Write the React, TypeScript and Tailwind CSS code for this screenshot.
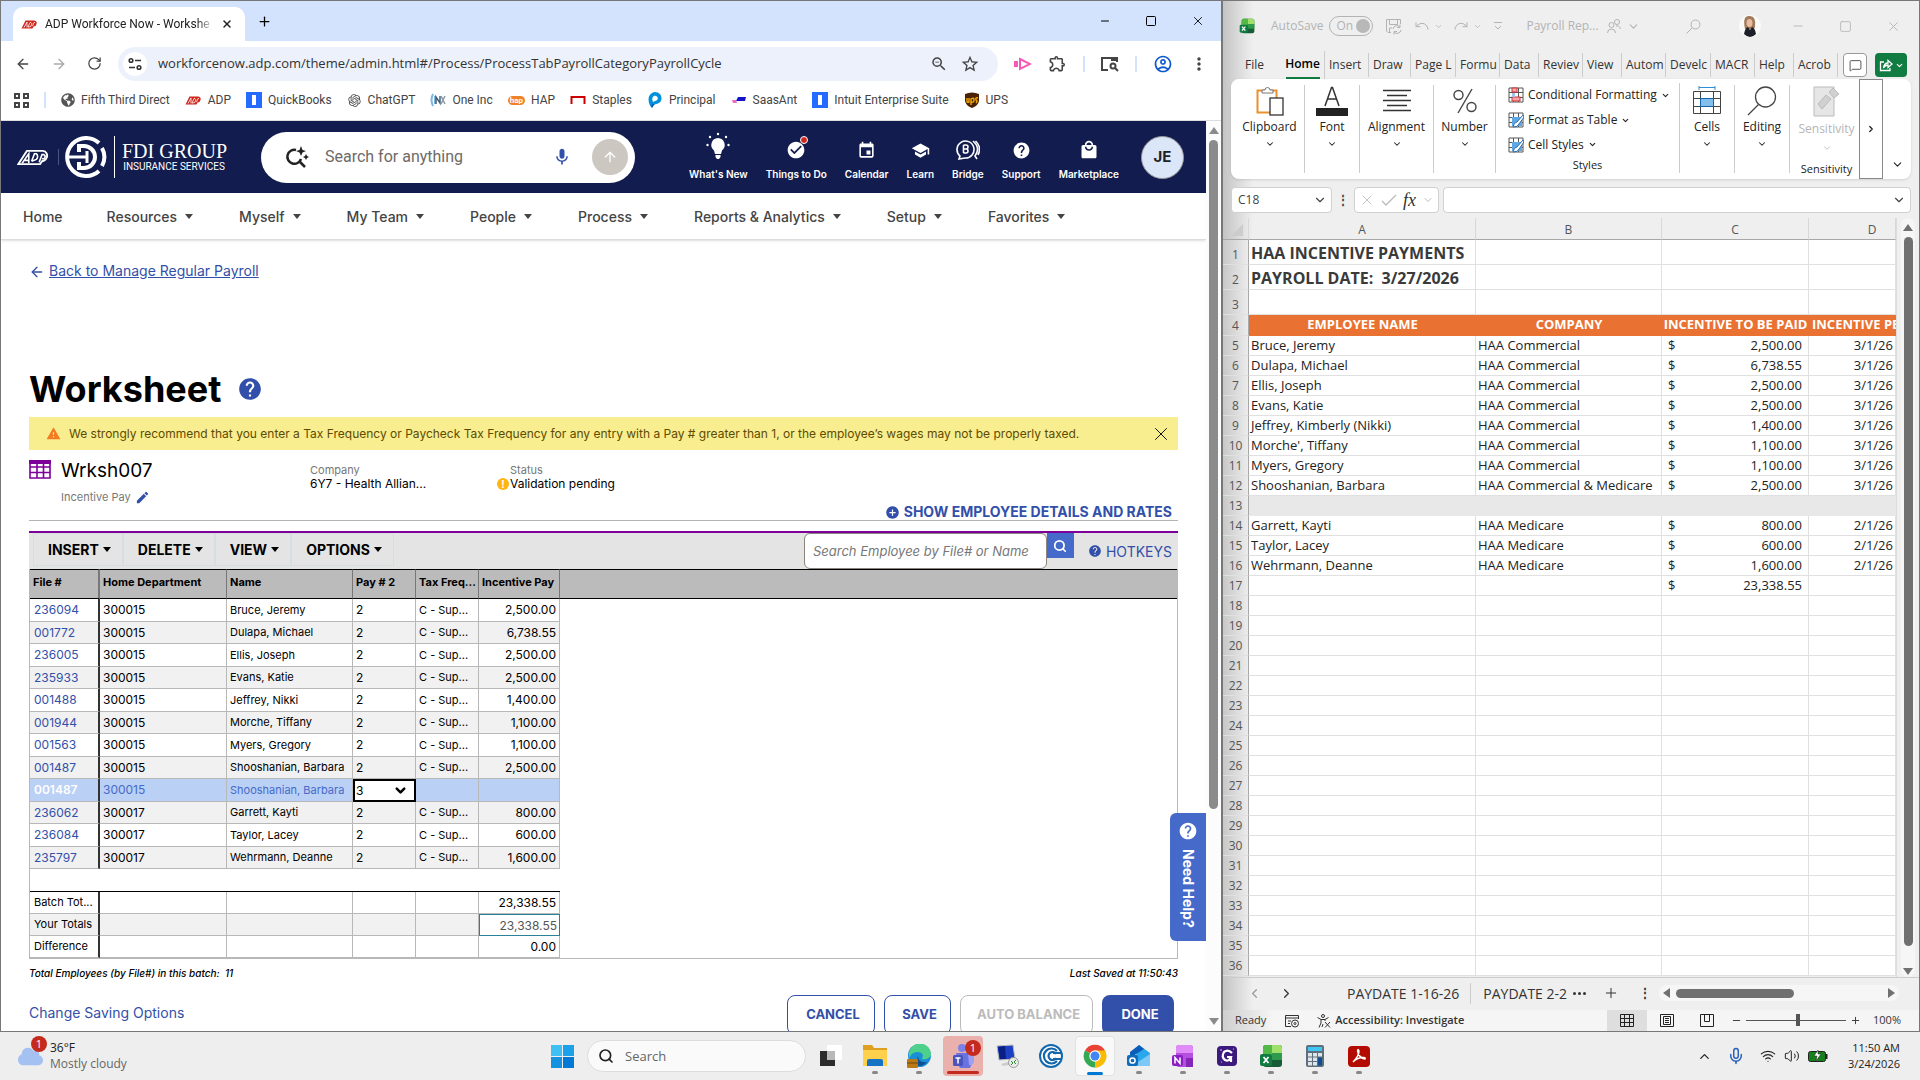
import type { ReactNode } from "react";
import {
    ArrowLeft, ArrowRight, ArrowUp, ChevronDown, ChevronLeft, ChevronRight, ChevronUp, MessageSquare,
    Minus, Plus, RotateCw, Search, Share, Square, X, Wifi, Volume2, Undo, Redo, Mic
} from "lucide-react";
import {
    MdCheckCircle, MdEdit, MdEvent, MdHelp, MdLocalMall, MdMic, MdMoreVert, MdOutlineAccountCircle,
    MdOutlineExtension, MdSchool, MdStarOutline, MdWarning, MdZoomOut, MdAddCircle
} from "react-icons/md";
import { RiOpenaiFill } from "react-icons/ri";
import { FaGlobeAmericas, FaCloud } from "react-icons/fa";

const worksheetRows = [
    ["236094", "300015", "Bruce, Jeremy", "2", "C - Sup...", "2,500.00"],
    ["001772", "300015", "Dulapa, Michael", "2", "C - Sup...", "6,738.55"],
    ["236005", "300015", "Ellis, Joseph", "2", "C - Sup...", "2,500.00"],
    ["235933", "300015", "Evans, Katie", "2", "C - Sup...", "2,500.00"],
    ["001488", "300015", "Jeffrey, Nikki", "2", "C - Sup...", "1,400.00"],
    ["001944", "300015", "Morche, Tiffany", "2", "C - Sup...", "1,100.00"],
    ["001563", "300015", "Myers, Gregory", "2", "C - Sup...", "1,100.00"],
    ["001487", "300015", "Shooshanian, Barbara", "2", "C - Sup...", "2,500.00"],
    ["001487", "300015", "Shooshanian, Barbara", "3", "", ""],
    ["236062", "300017", "Garrett, Kayti", "2", "C - Sup...", "800.00"],
    ["236084", "300017", "Taylor, Lacey", "2", "C - Sup...", "600.00"],
    ["235797", "300017", "Wehrmann, Deanne", "2", "C - Sup...", "1,600.00"],
];
const selectedRow = 8;

const sheetRows: Record<number, string[]> = {
    5: ["Bruce, Jeremy", "HAA Commercial", "2,500.00", "3/1/26"],
    6: ["Dulapa, Michael", "HAA Commercial", "6,738.55", "3/1/26"],
    7: ["Ellis, Joseph", "HAA Commercial", "2,500.00", "3/1/26"],
    8: ["Evans, Katie", "HAA Commercial", "2,500.00", "3/1/26"],
    9: ["Jeffrey, Kimberly (Nikki)", "HAA Commercial", "1,400.00", "3/1/26"],
    10: ["Morche', Tiffany", "HAA Commercial", "1,100.00", "3/1/26"],
    11: ["Myers, Gregory", "HAA Commercial", "1,100.00", "3/1/26"],
    12: ["Shooshanian, Barbara", "HAA Commercial & Medicare", "2,500.00", "3/1/26"],
    14: ["Garrett, Kayti", "HAA Medicare", "800.00", "2/1/26"],
    15: ["Taylor, Lacey", "HAA Medicare", "600.00", "2/1/26"],
    16: ["Wehrmann, Deanne", "HAA Medicare", "1,600.00", "2/1/26"],
    17: ["", "", "23,338.55", ""],
};

/* ---------- small drawings ---------- */

function AdpMark()
{
    return (
        <svg viewBox="0 0 34 20" className="h-[11px] w-[17px]">
            <path d="M1 18 L9 2 H27 a5 5 0 0 1 4 7 a6 6 0 0 1 -6 5 L23 18 Z" fill="#d0271d"/>
            <path d="M6 16 L12 5 V16 M14 15 L18 6 H20 a3 3 0 0 1 1 4 a5 5 0 0 1 -5 5 Z M23 13 L26 6 H28" fill="none" stroke="#fff" strokeWidth="1.6"/>
        </svg>
    );
}

function IntuitMark()
{
    return <span className="flex h-4 w-4 items-center justify-center bg-[#236cff]"><span className="h-2.5 w-1 bg-white"></span></span>;
}

function OneIncMark()
{
    return (
        <svg viewBox="0 0 16 16" className="h-4 w-4" fill="none">
            <path d="M3 2 Q0 8 3 14 M5 4 V12" stroke="#7fb6dd" strokeWidth="2"/>
            <path d="M6 12 V5 L10 11 V4" stroke="#45617a" strokeWidth="1.5"/>
            <path d="M11 4 L15 12 M15 4 L11 12" stroke="#8a97a8" strokeWidth="1.5"/>
        </svg>
    );
}

function StaplesMark()
{
    return <svg viewBox="0 0 16 16" className="h-4 w-4"><path d="M1.500 12 V5 H14.500 V12" fill="none" stroke="#cc0000" strokeWidth="2"/></svg>;
}

function PrincipalMark()
{
    return (
        <svg viewBox="0 0 16 16" className="h-4 w-4">
            <path d="M5 16 C0 11 0 1 8 0 C16 0 17 11 9 12 C7 12 6 14 5 16Z" fill="#0091da"/>
            <path d="M6 10 C4 5 7 3 9 4 C12 5 11 9 8 9Z" fill="#fff"/>
            <path d="M5 16 C4 13 5 12 9 12 C7 12 6 14 5 16Z" fill="#003da5"/>
        </svg>
    );
}

function SaasAntMark()
{
    return <svg viewBox="0 0 16 16" className="h-4 w-4"><path d="M7 5 H15 L14 9 H5Z" fill="#1512c9"/><path d="M1 8 H5 L6 11 H2Z" fill="#f06bc0"/></svg>;
}

function UpsMark()
{
    return (
        <svg viewBox="0 0 16 16" className="h-4 w-4">
            <path d="M1 2 Q8 -1 15 2 V9 Q14 14 8 16 Q2 14 1 9Z" fill="#4a2207"/>
            <path d="M3 6 V9 Q3 11 5 10 V6 M7 13 V7 Q10 5 10 8 Q10 11 7 10 M14 6 Q11 5 12 8 Q14 9 12 11" fill="none" stroke="#f5a800" strokeWidth="1.400"/>
        </svg>
    );
}

function FdiMark()
{
    return (
        <svg viewBox="0 0 42 42" className="h-[42px] w-[42px]" fill="none" stroke="#fff" strokeWidth="4">
            <path d="M34 7 A19 19 0 1 0 34 35"/>
            <path d="M37 12 A19 19 0 0 1 37 30"/>
            <path d="M1 21 H22" strokeWidth="3"/>
            <path d="M14 16 V10 H19 A11 11 0 0 1 19 32 H14 V26"/>
            <path d="M22 15 V27" strokeWidth="3"/>
        </svg>
    );
}

function SparkSearch()
{
    return (
        <svg viewBox="0 0 24 24" className="h-6 w-6" fill="none" stroke="#222" strokeWidth="2.500">
            <path d="M11 5 A7 7 0 1 0 16 14"/>
            <path d="M15 17 L20 22"/>
            <path d="M16 1 L17.500 5 L21 6 L17.500 7.500 L16 11 L14.500 7.500 L11 6 L14.500 5Z" fill="#222" stroke="none"/>
            <path d="M21 9 L22 11 L24 12 L22 13 L21 15 L20 13 L18 12 L20 11Z" fill="#222" stroke="none"/>
        </svg>
    );
}

function BulbIcon()
{
    return (
        <svg viewBox="0 0 24 28" className="mb-2 h-7 w-6" fill="#fff">
            <path d="M12 6 A7 7 0 0 0 8 18.500 L9 22 H15 L16 18.500 A7 7 0 0 0 12 6Z M9.500 23 H14.500 V25 L13 27 H11 L9.500 25Z"/>
            <circle cx="12" cy="2" r="1.200"/><circle cx="4" cy="5" r="1.200"/><circle cx="20" cy="5" r="1.200"/>
            <circle cx="1.500" cy="13" r="1.200"/><circle cx="22.500" cy="13" r="1.200"/>
        </svg>
    );
}

function BridgeIcon()
{
    return (
        <svg viewBox="0 0 24 22" className="h-[22px] w-6" fill="none" stroke="#fff" strokeWidth="1.600">
            <path d="M3 20 L4 17 A8.500 8.500 0 1 1 9 19 Z"/>
            <path d="M7.500 6 V14 M7.500 6 H10 A2 2 0 0 1 10 10 H7.500 M10 10 A2 2 0 0 1 10 14 H7.500"/>
            <path d="M17 2 Q25 9 19 17 L21 20 M19.500 2 Q26 8 22 16"/>
        </svg>
    );
}

function ExcelMark(props: { className: string })
{
    return (
        <svg viewBox="0 0 24 24" className={props.className}>
            <rect x="4" y="1" width="19" height="22" rx="3" fill="#185c37"/>
            <path d="M4 4 a3 3 0 0 1 3 -3 H13 V12 H4Z" fill="#52b846"/>
            <path d="M13 1 H20 a3 3 0 0 1 3 3 V9 H13Z" fill="#9fe06a"/>
            <rect x="13" y="9" width="10" height="7" fill="#2e9a4c"/>
            <rect x="1" y="10" width="12" height="12" rx="2" fill="#107c41"/>
            <path d="M4.500 13 L9.500 19 M9.500 13 L4.500 19" stroke="#fff" strokeWidth="1.800"/>
        </svg>
    );
}

function ClipboardIcon()
{
    return (
        <svg viewBox="0 0 28 30" className="h-[30px] w-7">
            <rect x="1.500" y="4.500" width="19" height="22" fill="#fff" stroke="#e8912d" strokeWidth="2"/>
            <path d="M6 7 V4 H9 A2.500 2.500 0 0 1 14 4 H17 V7Z" fill="#fff" stroke="#777"/>
            <rect x="14" y="12" width="13" height="17" fill="#fff" stroke="#333" strokeWidth="1.300"/>
        </svg>
    );
}

function GridIcon(props: { kind: string })
{
    return (
        <svg viewBox="0 0 16 16" className="h-4 w-4">
            <path d="M1 1 H15 V15 H1Z M1 5.500 H15 M1 10.500 H15 M5.500 1 V15 M10.500 1 V15" fill="#fff" stroke="#555"/>
            {props.kind == "conditional" ?
                <><rect x="4" y="1" width="5" height="4" fill="#f7a5a5" stroke="#d13438"/><rect x="4" y="10" width="8" height="4" fill="#f7a5a5" stroke="#d13438"/><rect x="4" y="6" width="3" height="4" fill="#9dc8ee"/></>
                : <><rect x="4" y="5" width="10" height="9" fill="#5ea8e5"/><path d="M15 3 L9 10 Q6 10 5 15 Q10 15 11 12 L16 5Z" fill="#fff" stroke="#2b6cb0"/></>}
        </svg>
    );
}

function CellsIcon()
{
    return (
        <svg viewBox="0 0 28 30" className="h-[30px] w-7" fill="none">
            <path d="M6 1.500 H22 M6 0 V4 M22 0 V4" stroke="#2f8fd8"/>
            <path d="M0.500 5.500 H27.500 V27.500 H0.500Z M0.500 12.500 H27.500 M0.500 20.500 H27.500 M7.500 5.500 V27.500 M20.500 5.500 V27.500" stroke="#444"/>
            <rect x="7.500" y="12.500" width="13" height="8" fill="#83beec" stroke="#1664a8"/>
        </svg>
    );
}

/* ---------- browser window ---------- */

function Caret()
{
    return <span className="inline-block border-x-4 border-t-[5px] border-x-transparent border-t-current"></span>;
}

function Bookmark(props: { label: string, children: ReactNode })
{
    return (
        <a href="#" className="flex shrink-0 items-center gap-1.5 text-[#444]">
            {props.children}
            <span>{props.label}</span>
        </a>
    );
}

function BrowserChrome()
{
    return (
        <header className="font-['Open_Sans',sans-serif]">
            <div className="flex h-10 items-end bg-[#d3e2fd] pl-3">
                <div className="flex h-[34px] w-[232px] items-center gap-[7px] rounded-t-[10px] bg-white px-2 font-['Roboto',sans-serif] text-[12px] text-[#222]">
                    <AdpMark/>
                    <span className="flex-1 overflow-hidden whitespace-nowrap mask-r-from-90%">ADP Workforce Now - Workshe</span>
                    <button aria-label="Close tab" className="py-1 pr-1"><X size={12} strokeWidth={3}/></button>
                </div>
                <button aria-label="New tab" className="mb-3 ml-3"><Plus size={15}/></button>
                <div className="ml-auto flex h-full items-center gap-[34px] pr-4">
                    <button aria-label="Minimize"><Minus size={12} strokeWidth={2}/></button>
                    <button aria-label="Maximize"><Square size={12} strokeWidth={2}/></button>
                    <button aria-label="Close"><X size={14} strokeWidth={1.5}/></button>
                </div>
            </div>
            <div className="flex h-[45px] items-center gap-5 bg-white pr-3 pl-[14px] text-[#444]">
                <button aria-label="Back"><ArrowLeft size={16}/></button>
                <button aria-label="Forward" className="text-[#aaa]"><ArrowRight size={16}/></button>
                <button aria-label="Reload"><RotateCw size={15}/></button>
                <div className="-ml-1 flex h-[34px] flex-1 items-center gap-2 rounded-full bg-[#ecf1fb] pr-[14px] pl-[5px]">
                    <button aria-label="Site information" className="flex h-6 w-6 items-center justify-center rounded-full bg-white">
                        <svg viewBox="0 0 14 14" className="h-[14px] w-[14px]" fill="none" stroke="#333" strokeWidth="1.600">
                            <circle cx="3" cy="3.500" r="1.800"/><path d="M7 3.500 H13 M1 10.500 H7"/><circle cx="11" cy="10.500" r="1.800"/>
                        </svg>
                    </button>
                    <input aria-label="Address" className="min-w-0 flex-1 bg-transparent pl-[3px] text-[13px] text-[#333] outline-none" defaultValue="workforcenow.adp.com/theme/admin.html#/Process/ProcessTabPayrollCategoryPayrollCycle"/>
                    <button aria-label="Zoom"><MdZoomOut size={18}/></button>
                    <button aria-label="Bookmark" className="mr-1 ml-1"><MdStarOutline size={20}/></button>
                </div>
                <div className="-ml-1 flex items-center gap-4">
                    <button aria-label="Recorder">
                        <svg viewBox="0 0 18 14" className="h-[14px] w-[18px]" fill="none" stroke="#f759b8" strokeWidth="2"><path d="M6 2 L16 7 L6 12Z"/><path d="M0 4 H4 V10 H0Z" fill="#f759b8" stroke="none"/></svg>
                    </button>
                    <button aria-label="Extensions"><MdOutlineExtension size={19}/></button>
                    <span className="h-4 w-0.5 bg-[#d3e2fd]"></span>
                    <button aria-label="Search tabs">
                        <svg viewBox="0 0 18 16" className="h-4 w-[18px]" fill="none" stroke="#444" strokeWidth="2"><path d="M7 14 H1 V2 H16 V6"/><path d="M10 3.500 H17" strokeWidth="3"/><circle cx="12" cy="10" r="2.500"/><path d="M14 12 L17 15"/></svg>
                    </button>
                    <span className="h-4 w-0.5 bg-[#d3e2fd]"></span>
                    <button aria-label="Profile" className="text-[#0b57d0]"><MdOutlineAccountCircle size={20}/></button>
                    <button aria-label="Menu"><MdMoreVert size={20}/></button>
                </div>
            </div>
            <nav className="flex h-[35px] items-center gap-[15px] overflow-hidden border-b border-[#ddd] bg-white pb-1.5 pl-[13px] font-['Roboto',sans-serif] text-[12px] text-[#444]">
                <button aria-label="Apps" className="grid grid-cols-2 gap-[3px]">
                    <span className="h-1.5 w-1.5 border-2"></span><span className="h-1.5 w-1.5 border-2"></span>
                    <span className="h-1.5 w-1.5 border-2"></span><span className="h-1.5 w-1.5 border-2"></span>
                </button>
                <span className="h-4 w-0.5 bg-[#d3e2fd]"></span>
                <Bookmark label="Fifth Third Direct"><FaGlobeAmericas size={14} color="#555"/></Bookmark>
                <Bookmark label="ADP"><AdpMark/></Bookmark>
                <Bookmark label="QuickBooks"><IntuitMark/></Bookmark>
                <Bookmark label="ChatGPT"><RiOpenaiFill size={15}/></Bookmark>
                <Bookmark label="One Inc"><OneIncMark/></Bookmark>
                <Bookmark label="HAP"><span className="rounded-full bg-[#f08228] px-0.5 text-[8px] leading-[9px] font-bold text-white">hap</span></Bookmark>
                <Bookmark label="Staples"><StaplesMark/></Bookmark>
                <Bookmark label="Principal"><PrincipalMark/></Bookmark>
                <Bookmark label="SaasAnt"><SaasAntMark/></Bookmark>
                <Bookmark label="Intuit Enterprise Suite"><IntuitMark/></Bookmark>
                <Bookmark label="UPS"><UpsMark/></Bookmark>
            </nav>
        </header>
    );
}

function HeaderLink(props: { label: string, children: ReactNode })
{
    return (
        <a href="#" className="flex flex-col items-center text-[10px] leading-4 font-semibold whitespace-nowrap text-white">
            <span className="relative mt-1 flex h-7 items-center">{props.children}</span>
            <span className="mt-0.5">{props.label}</span>
        </a>
    );
}

function AppHeader()
{
    return (
        <div className="flex h-[72px] items-center bg-[#121c4e] pr-[22px] pl-4 text-white">
            <svg viewBox="0 0 34 18" className="h-[17px] w-[33px]" fill="none" stroke="#fff">
                <path d="M1 16 L10 2 H27 a5 5 0 0 1 4 7 a6 6 0 0 1 -5 4 L24 16 Z" strokeWidth="2"/>
                <path d="M5 15 L12 5 V15 M8 12 H12 M15 13 L18 5 H20 a4 4 0 0 1 0 6 L15 13 M23 14 L26 6 H28 a2 2 0 0 1 -2 4" strokeWidth="1.700"/>
            </svg>
            <span className="mr-1.5 ml-2 h-4 w-px bg-[#4b5480]"></span>
            <FdiMark/>
            <span className="mx-[7px] h-[42px] w-px bg-white"></span>
            <div className="w-[104px] text-center whitespace-nowrap">
                <p className="font-['Liberation_Serif',serif] text-[20px] leading-5">FDI GROUP</p>
                <p className="font-['Roboto',sans-serif] text-[10px] leading-3">INSURANCE SERVICES</p>
            </div>
            <div className="ml-[35px] flex h-[51px] w-[374px] items-center rounded-full bg-white pr-[7px] pl-6">
                <SparkSearch/>
                <input aria-label="Search for anything" placeholder="Search for anything" className="ml-4 min-w-0 flex-1 font-['Roboto',sans-serif] text-[16px] text-[#666] outline-none placeholder:text-[#6e6a66]"/>
                <button aria-label="Voice search" className="mr-5 text-[#324fa9]"><MdMic size={20}/></button>
                <button aria-label="Submit search" className="flex h-9 w-9 items-center justify-center rounded-full bg-[#ccc7c1] text-white"><ArrowUp size={16}/></button>
            </div>
            <div className="ml-auto flex items-center gap-[18px]">
                <HeaderLink label="What's New"><BulbIcon/></HeaderLink>
                <HeaderLink label="Things to Do">
                    <MdCheckCircle size={20}/>
                    <span className="absolute top-0 -right-0.5 h-2 w-2 rounded-full border border-white bg-[#d0271d]"></span>
                </HeaderLink>
                <HeaderLink label="Calendar"><MdEvent size={19}/></HeaderLink>
                <HeaderLink label="Learn"><MdSchool size={19}/></HeaderLink>
                <HeaderLink label="Bridge"><BridgeIcon/></HeaderLink>
                <HeaderLink label="Support"><MdHelp size={19}/></HeaderLink>
                <HeaderLink label="Marketplace"><MdLocalMall size={20}/></HeaderLink>
                <button className="ml-1 h-[43px] w-[43px] rounded-full border border-[#999] bg-[#dbe6f9] text-[15px] font-bold text-[#222]">JE</button>
            </div>
        </div>
    );
}

function MainNav()
{
    const items = ["Resources", "Myself", "My Team", "People", "Process", "Reports & Analytics", "Setup", "Favorites"];
    return (
        <nav className="flex h-[47px] items-center gap-[46px] border-b border-[#ddd] pl-[22px] text-[14px] font-medium whitespace-nowrap text-[#444] shadow-sm">
            <a href="#" className="-mr-0.5">Home</a>
            {items.map((it) => <button key={it} className="flex items-center gap-2">{it}<Caret/></button>)}
        </nav>
    );
}

function WorksheetInfo()
{
    return (
        <div className="relative h-[71px] border-b border-[#b4b4b4] pt-[9px]">
            <div className="flex">
                <div className="flex w-[281px] gap-[10px]">
                    <svg viewBox="0 0 22 19" className="mt-px h-[19px] w-[22px]" fill="none" stroke="#7d009b" strokeWidth="2">
                        <path d="M1 1 H21 V18 H1Z M1 7 H21 M1 12.500 H21 M8 3 V18 M14.500 3 V18" strokeWidth="1.600"/><path d="M0 2 H22" strokeWidth="4"/>
                    </svg>
                    <div>
                        <h2 className="text-[19px] leading-6">Wrksh007</h2>
                        <p className="mt-1.5 flex items-center gap-1 text-[11px] leading-4 text-[#777]">Incentive Pay
                            <button aria-label="Edit" className="text-[#324fa9]"><MdEdit size={15}/></button>
                        </p>
                    </div>
                </div>
                <div className="mt-1 w-[187px] text-[12px] leading-[14px]">
                    <p className="text-[11px] text-[#777]">Company</p>
                    <p>6Y7 - Health Allian...</p>
                </div>
                <div className="mt-1 text-[12px] leading-[14px]">
                    <p className="pl-[13px] text-[11px] text-[#777]">Status</p>
                    <p className="flex items-center gap-px"><span className="flex h-3 w-3 items-center justify-center rounded-full bg-[#ffb612] text-[10px] font-bold text-white">!</span>Validation pending</p>
                </div>
            </div>
            <button className="absolute right-1.5 bottom-0 flex items-center gap-1 text-[14px] leading-4 font-bold text-[#324fa9]">
                <MdAddCircle size={15}/>SHOW EMPLOYEE DETAILS AND RATES
            </button>
        </div>
    );
}

function WorksheetToolbar()
{
    return (
        <div className="mt-2.5 flex h-[38px] border-t-2 border-[#7d009b] bg-[#e4e4e4] pl-1">
            {["INSERT", "DELETE", "VIEW", "OPTIONS"].map((it) => (
                <button key={it} className="mb-[3px] flex items-center gap-1 border border-[#d5dfe2] pr-[11px] pl-3.5 text-[14px] font-bold">{it}<Caret/></button>
            ))}
            <div className="ml-auto flex items-start">
                <input aria-label="Search employee" placeholder="Search Employee by File# or Name" className="h-9 w-[243px] rounded-md border border-[#8c857b] bg-white px-2 text-[13px] italic placeholder:text-[#777]"/>
                <button aria-label="Search" className="flex h-[25px] w-[27px] items-center justify-center bg-[#466ac9] text-white"><Search size={14} strokeWidth={3}/></button>
                <a href="#" className="mr-1.5 ml-[14px] flex h-9 items-center gap-1 text-[14px] text-[#324fa9]"><MdHelp size={14}/>HOTKEYS</a>
            </div>
        </div>
    );
}

function WorksheetTable()
{
    const line = "border-r border-b border-[#b8b8b8] px-[3px] whitespace-nowrap";
    const firstCell = "border-b border-b-[#b8b8b8] border-r-2 border-r-[#333] px-1 whitespace-nowrap";
    const head = "h-[30px] border-y border-y-black border-r border-r-[#777] px-[3px] pb-1 text-left text-[11px] font-bold whitespace-nowrap";
    return (
        <div className="border-r border-b border-l border-[#b8b8b8] text-[12px]">
            <table className="w-full table-fixed border-separate border-spacing-0">
                <colgroup>
                    <col className="w-[70px]"/><col className="w-[127px]"/><col className="w-[126px]"/><col className="w-[63px]"/>
                    <col className="w-[63px]"/><col className="w-[81px]"/><col/>
                </colgroup>
                <thead>
                    <tr className="bg-[#bbb]">
                        <th className={head + " border-r-2 border-r-[#333]"}>File #</th>
                        <th className={head}>Home Department</th>
                        <th className={head}>Name</th>
                        <th className={head}>Pay # 2</th>
                        <th className={head}>Tax Freq...</th>
                        <th className={head}>Incentive Pay</th>
                        <th className="border-y border-black"></th>
                    </tr>
                </thead>
                <tbody>
                    {worksheetRows.map((row, index) => {
                        const isSelected = index == selectedRow;
                        let color = index % 2 == 0 ? "bg-white h-[23px]" : "bg-[#f1f1f1] h-[22px]";
                        if(isSelected) color = "bg-[#bbd0f5] text-[#466ac9] h-[23px]";
                        return (
                            <tr key={index}>
                                <td className={firstCell + " " + color}>
                                    <a href="#" className={isSelected ? "font-semibold text-white" : "text-[#324fa9]"}>{row[0]}</a>
                                </td>
                                <td className={line + " " + color}>{row[1]}</td>
                                <td className={line + " text-[11px] " + color}>{row[2]}</td>
                                {isSelected ?
                                    <td className={color}>
                                        <div className="relative">
                                            <select aria-label="Pay number" className="block h-[23px] w-full appearance-none border-2 border-black bg-white px-px text-black" defaultValue="3">
                                                <option>1</option><option>2</option><option>3</option>
                                            </select>
                                            <ChevronDown size={15} strokeWidth={4} className="pointer-events-none absolute top-1 right-2 text-black"/>
                                        </div>
                                    </td>
                                    : <td className={line + " " + color}>{row[3]}</td>}
                                <td className={line + " text-[11px] " + color}>{row[4]}</td>
                                <td className={line + " text-right " + color}>{row[5]}</td>
                                <td></td>
                            </tr>
                        );
                    })}
                    <tr><td colSpan={6} className="h-[23px] border-b border-black"></td><td></td></tr>
                    {[["Batch Tot...", "23,338.55"], ["Your Totals", "23,338.55"], ["Difference", "0.00"]].map((row, index) => {
                        const color = index == 1 ? "bg-[#f1f1f1] h-[22px]" : "bg-white h-[22px]";
                        return (
                            <tr key={row[0]}>
                                <td className={firstCell + " text-[11px] " + color}>{row[0]}</td>
                                <td className={line + " " + color}></td>
                                <td className={line + " " + color}></td>
                                <td className={line + " " + color}></td>
                                <td className={line + " " + color}></td>
                                {index == 1 ?
                                    <td className="h-[22px]"><input aria-label="Your totals" className="block h-[22px] w-full border border-[#2b8298] px-0.5 text-right text-[#555]" defaultValue={row[1]}/></td>
                                    : <td className={line + " text-right " + color}>{row[1]}</td>}
                                <td></td>
                            </tr>
                        );
                    })}
                </tbody>
            </table>
        </div>
    );
}

function WorksheetPage()
{
    const outline = "h-10 rounded-lg border border-[#324fa9] pl-1 text-[13px] font-bold text-[#324fa9]";
    return (
        <main className="px-7">
            <a href="#" className="mt-[21px] flex items-center gap-1 text-[14px] leading-5 text-[#324fa9]">
                <ArrowLeft size={16} className="mt-0.5"/><span className="underline">Back to Manage Regular Payroll</span>
            </a>
            <div className="mt-[85px] flex h-[46px] items-center gap-4">
                <h1 className="text-[36px] font-bold">Worksheet</h1>
                <button aria-label="Help" className="text-[#324fa9]"><MdHelp size={26}/></button>
            </div>
            <div className="mt-[5px] flex h-[33px] items-center bg-[#f8ee8f] pr-1.5 pl-[17px] text-[12px] text-[#5f4b00]">
                <MdWarning size={15} className="mr-2 text-[#f47b20]"/>
                <p className="flex-1 whitespace-nowrap">We strongly recommend that you enter a Tax Frequency or Paycheck Tax Frequency for any entry with a Pay # greater than 1, or the employee’s wages may not be properly taxed.</p>
                <button aria-label="Dismiss" className="text-black"><X size={22} strokeWidth={1}/></button>
            </div>
            <WorksheetInfo/>
            <WorksheetToolbar/>
            <WorksheetTable/>
            <div className="mt-1.5 flex justify-between text-[10px] leading-4 font-medium italic">
                <p className="whitespace-pre">Total Employees (by File#) in this batch:  11</p>
                <p>Last Saved at 11:50:43</p>
            </div>
            <div className="mt-3.5 flex items-start gap-[9px] pr-1">
                <a href="#" className="mt-2 mr-auto text-[14px] leading-5 text-[#324fa9]">Change Saving Options</a>
                <button className={outline + " w-[88px]"}>CANCEL</button>
                <button className={outline + " w-[67px]"}>SAVE</button>
                <button disabled className="h-10 w-[133px] rounded-lg border border-[#bbb] pl-1 text-[13px] font-bold text-[#bbb]">AUTO BALANCE</button>
                <button className="h-10 w-[72px] rounded-lg bg-[#324fa9] pl-1 text-[13px] font-bold text-white">DONE</button>
            </div>
        </main>
    );
}

function BrowserWindow()
{
    return (
        <section className="flex min-w-0 flex-col overflow-hidden border border-r-2 border-[#777] bg-white font-['Inter',sans-serif]">
            <BrowserChrome/>
            <div className="flex min-h-0 flex-1">
                <div className="relative min-w-0 flex-1 overflow-hidden">
                    <AppHeader/>
                    <MainNav/>
                    <WorksheetPage/>
                    <button className="absolute right-0 bottom-[90px] flex h-32 w-9 flex-col items-center rounded-l-md bg-[#466ac9] pt-2 text-[14px] font-bold text-white">
                        <MdHelp size={20}/>
                        <span className="mt-2 [writing-mode:vertical-rl]">Need Help?</span>
                    </button>
                </div>
                <div className="flex w-[15px] flex-col items-center bg-[#fcfcfc] pt-1.5 pb-1.5">
                    <span className="border-x-[5px] border-b-[7px] border-x-transparent border-b-[#8b8b8b]"></span>
                    <span className="mt-1.5 w-[9px] flex-[671] rounded-full bg-[#8b8b8b]"></span>
                    <span className="flex-[210]"></span>
                    <span className="border-x-[5px] border-t-[7px] border-x-transparent border-t-[#8b8b8b]"></span>
                </div>
            </div>
        </section>
    );
}

/* ---------- spreadsheet window ---------- */

function SheetTitleBar()
{
    return (
        <div className="flex h-[50px] items-center pr-[18px] pl-4 text-[12px] text-[#b3b3b3]">
            <ExcelMark className="h-4 w-4"/>
            <label htmlFor="autosave" className="ml-4">AutoSave</label>
            <button id="autosave" role="switch" aria-checked="true" className="ml-1.5 flex h-5 w-11 items-center justify-between rounded-full border border-[#b3b3b3] pr-0.5 pl-1.5">On<span className="h-3.5 w-3.5 rounded-full bg-[#b8b8b8]"></span></button>
            <button aria-label="Save" className="ml-3">
                <svg viewBox="0 0 17 17" className="h-[17px] w-[17px]" fill="none" stroke="#b3b3b3"><path d="M6 14.500 H3 L1.500 13 V1.500 H15.500 V6 M4.500 1.500 V6.500 H12.500 V1.500 M4.500 14 V10 H7"/><path d="M8 11 A4 4 0 0 1 15 9 M15 6.500 V9.500 H12 M16 12 A4 4 0 0 1 9 14 M9 16.500 V13.500 H12"/></svg>
            </button>
            <button aria-label="Undo" className="ml-3 flex items-center gap-1"><Undo size={16} strokeWidth={1.5}/><ChevronDown size={9}/></button>
            <button aria-label="Redo" className="ml-2.5 flex items-center gap-1"><Redo size={16} strokeWidth={1.5}/><ChevronDown size={9}/></button>
            <button aria-label="Customize toolbar" className="ml-3"><svg viewBox="0 0 8 8" className="h-2 w-2" stroke="#b3b3b3" fill="none"><path d="M0 0.500 H8 M1 4 L4 7 L7 4"/></svg></button>
            <span className="ml-6">Payroll Rep...</span>
            <svg viewBox="0 0 14 14" className="ml-2 h-[14px] w-[14px]" fill="none" stroke="#b3b3b3"><circle cx="4.500" cy="6" r="2.500"/><path d="M0.500 14 A4 4 0 0 1 8.500 14"/><circle cx="10" cy="3" r="2.500"/><path d="M9 7 A4 4 0 0 1 13.500 10"/></svg>
            <ChevronDown size={13} className="ml-1.5"/>
            <button aria-label="Search" className="mr-[37px] ml-auto">
                <svg viewBox="0 0 15 15" className="h-[15px] w-[15px]" fill="none" stroke="#b3b3b3"><circle cx="9.500" cy="5.500" r="4.500"/><path d="M6.500 8.500 L0.500 14.500"/></svg>
            </button>
            <svg viewBox="0 0 24 24" className="mr-[29px] h-6 w-6">
                <circle cx="12" cy="12" r="11" fill="#fbfaf9"/>
                <path d="M7 15 Q4 1 12 2 Q18 2 17 12 Q17 15 15 15Z" fill="#a07a5a"/>
                <ellipse cx="11.500" cy="9" rx="3" ry="4" fill="#e9bda1"/>
                <path d="M6 20 Q7 14 10 13 L12 16 L14 13 Q17 14 18 20 Q12 26 6 20Z" fill="#1d2028"/>
            </svg>
            <button aria-label="Minimize"><Minus size={14} strokeWidth={1.5}/></button>
            <button aria-label="Maximize" className="ml-[34px]"><Square size={13} strokeWidth={1.5}/></button>
            <button aria-label="Close" className="ml-[34px]"><X size={15} strokeWidth={1.5}/></button>
        </div>
    );
}

function RibbonTabs()
{
    // labels are cut to what the narrow window leaves room for
    const tabs = [
        ["Insert", "w-[44px]"], ["Draw", "w-[42px]"], ["Page L", "w-[45px]"], ["Formu", "w-[44px]"], ["Data", "w-[39px]"], ["Reviev", "w-[44px]"],
        ["View", "w-[39px]"], ["Autom", "w-[44px]"], ["Develc", "w-[45px]"], ["MACR", "w-[44px]"], ["Help", "w-[39px]"], ["Acrob", "w-[44px]"]
    ];
    return (
        <div className="flex h-[28px] items-center pr-3 pl-[22px] text-[12px] text-[#333]">
            <button className="w-[36px] text-left">File</button>
            <button className="flex h-7 w-[44px] flex-col items-center justify-end border-r border-[#ccc]">
                <span className="pb-1 font-semibold text-black">Home</span><span className="h-0.5 w-[34px] bg-[#107c41]"></span>
            </button>
            {tabs.map((it) => <button key={it[0]} className={"h-6 border-r border-[#ccc] pl-1 text-left whitespace-nowrap " + it[1]}>{it[0]}</button>)}
            <button aria-label="Comments" className="ml-auto flex h-6 w-6 items-center justify-center rounded-sm border border-[#999] bg-white"><MessageSquare size={13} strokeWidth={1.5}/></button>
            <button aria-label="Share" className="ml-2 flex h-6 w-8 items-center justify-center gap-0.5 rounded-sm bg-[#107c41] text-white">
                <svg viewBox="0 0 14 14" className="h-[14px] w-[14px]" fill="none" stroke="#fff" strokeWidth="1.300"><path d="M5 4 H1.500 V12.500 H11 V10"/><path d="M4.500 10 Q5 5 9 5 V2.500 L13 6 L9 9.500 V7 Q6 7 4.500 10Z"/></svg>
                <ChevronDown size={9} strokeWidth={3}/>
            </button>
        </div>
    );
}

function RibbonGroup(props: { label: string, className: string, children: ReactNode })
{
    return (
        <button className={"my-1.5 flex flex-col items-center border-r border-[#ccc] " + props.className}>
            <span className="flex h-[31px] items-center">{props.children}</span>
            <span className="mt-px leading-5">{props.label}</span>
            <ChevronDown size={10} strokeWidth={2.5} className="mt-0.5"/>
        </button>
    );
}

function Ribbon()
{
    return (
        <div className="mx-2 flex h-[100px] rounded-lg bg-white text-[12px] text-[#222] shadow">
            <RibbonGroup label="Clipboard" className="w-[74px] pl-1"><ClipboardIcon/></RibbonGroup>
            <RibbonGroup label="Font" className="w-[55px]">
                <svg viewBox="0 0 32 30" className="h-[30px] w-8"><path d="M9 20 L15.500 1.500 H16.500 L23 20 M11.500 13 H20.500" fill="none" stroke="#333" strokeWidth="1.500"/><rect y="22" width="32" height="8" fill="#222"/></svg>
            </RibbonGroup>
            <RibbonGroup label="Alignment" className="w-[74px]">
                <svg viewBox="0 0 28 24" className="h-6 w-7" stroke="#333" strokeWidth="1.300"><path d="M0 1.500 H28 M4 6.500 H24 M0 11.500 H28 M4 16.500 H24 M0 21.500 H28"/></svg>
            </RibbonGroup>
            <RibbonGroup label="Number" className="w-[62px]">
                <svg viewBox="0 0 24 26" className="h-[26px] w-6" fill="none" stroke="#444" strokeWidth="1.400"><circle cx="5.500" cy="7" r="4.500"/><circle cx="18.500" cy="19" r="4.500"/><path d="M19 1 L5 25"/></svg>
            </RibbonGroup>
            <div className="mt-1 mb-1.5 flex w-[184px] flex-col border-r border-[#ccc] pl-3">
                <button className="flex h-[26px] items-center gap-1"><GridIcon kind="conditional"/>Conditional Formatting<ChevronDown size={9} strokeWidth={3}/></button>
                <button className="flex h-[26px] items-center gap-1"><GridIcon kind="table"/>Format as Table<ChevronDown size={9} strokeWidth={3}/></button>
                <button className="flex h-[26px] items-center gap-1"><GridIcon kind="styles"/>Cell Styles<ChevronDown size={9} strokeWidth={3}/></button>
                <span className="pr-3 text-center text-[11px] leading-4">Styles</span>
            </div>
            <RibbonGroup label="Cells" className="w-[55px]"><CellsIcon/></RibbonGroup>
            <RibbonGroup label="Editing" className="w-[55px]">
                <svg viewBox="0 0 30 30" className="h-[30px] w-[30px]" fill="none" stroke="#444" strokeWidth="1.300"><circle cx="18.500" cy="11" r="10"/><path d="M11.500 18.500 L1 29"/></svg>
            </RibbonGroup>
            <div className="flex min-w-0 flex-1 flex-col items-center pt-1.5 pl-1 text-[#b5b5b5]">
                <svg viewBox="0 0 28 32" className="h-8 w-7" fill="#e6e6e6" stroke="#bbb"><path d="M1 2 H21 V31 H1Z"/><path d="M5 19 L13 10 L18 14 L9 24Z M16 7 L20 3 L26 9 L21 13Z" fill="#d0d0d0"/></svg>
                <span className="mt-0.5 leading-5">Sensitivity</span>
                <ChevronDown size={10} className="mt-1"/>
                <span className="mt-2 text-[11px] leading-4 text-[#222]">Sensitivity</span>
            </div>
            <button aria-label="More groups" className="flex w-6 items-center justify-center border border-[#888]"><ChevronRight size={10} strokeWidth={3}/></button>
            <button aria-label="Ribbon options" className="flex w-7 items-end justify-center pb-2"><ChevronDown size={13}/></button>
        </div>
    );
}

function FormulaBar()
{
    return (
        <div className="mx-2 mt-2 flex h-[26px] text-[12px] text-[#444]">
            <div className="flex w-[101px] items-center rounded border border-[#d0d0d0] bg-white pr-1">
                <input aria-label="Name box" className="w-0 flex-1 px-1.5 outline-none" defaultValue="C18"/><ChevronDown size={14}/>
            </div>
            <span className="w-[22px] self-center text-center font-bold">⋮</span>
            <div className="flex w-[85px] items-center justify-between rounded border border-[#d0d0d0] bg-white px-1 text-[#bbb]">
                <button aria-label="Cancel"><X size={16} strokeWidth={1.3}/></button>
                <button aria-label="Enter"><svg viewBox="0 0 16 12" className="h-3 w-4" fill="none" stroke="#bbb" strokeWidth="1.300"><path d="M1 7 L5 11 L15 1"/></svg></button>
                <button className="font-['Liberation_Serif',serif] text-[18px] text-[#333] italic">fx</button>
                <ChevronDown size={12}/>
            </div>
            <div className="ml-1 flex flex-1 items-center rounded border border-[#d0d0d0] bg-white pr-1">
                <input aria-label="Formula" className="min-w-0 flex-1 px-1 outline-none"/><ChevronDown size={14}/>
            </div>
        </div>
    );
}

function SheetGrid()
{
    const cell = "border-r border-b border-[#e0e0e0] px-0.5 overflow-hidden whitespace-nowrap";
    const letter = "h-[22px] border-r border-b border-r-[#d8d8d8] border-b-[#a8a8a8] pt-0.5 font-normal";
    const orange = "bg-[#e97132] border-b border-[#e97132] overflow-hidden whitespace-nowrap text-center font-bold text-white";
    const numbers = Array.from({ length: 36 }, (_, index) => index + 1);
    return (
        <table className="w-full table-fixed border-separate border-spacing-0 text-[13px] text-[#222]">
            <colgroup>
                <col className="w-[26px]"/><col className="w-[227px]"/><col className="w-[186px]"/><col className="w-[147px]"/><col/>
            </colgroup>
            <thead className="text-[12px] text-[#555]">
                <tr>
                    <th className={letter}><span className="ml-2 block h-0 w-0 border-b-[12px] border-l-[12px] border-b-[#ccc] border-l-transparent"></span></th>
                    <th className={letter}>A</th><th className={letter}>B</th><th className={letter}>C</th><th className={letter + " pl-10"}>D</th>
                </tr>
            </thead>
            <tbody>
                {numbers.map((n) => {
                    const height = n < 4 ? "h-[25px]" : n == 4 ? "h-[21px]" : "h-[20px]";
                    const num = <th className={"border-r border-b border-r-[#a8a8a8] border-b-[#e0e0e0] bg-[linear-gradient(to_right,#c8c8c8,#ececec)] align-bottom text-[12px] leading-[18px] font-normal text-[#555] " + height}>{n}</th>;
                    if(n == 4) return <tr key={n}>{num}<td className={orange}>EMPLOYEE NAME</td><td className={orange}>COMPANY</td><td className={orange}>INCENTIVE TO BE PAID</td><td className={orange + " pl-[3px] text-left"}>INCENTIVE PE</td></tr>;
                    if(n == 13) return <tr key={n}>{num}<td colSpan={4} className="bg-[#e8e8e8]"></td></tr>;
                    if(n < 3) return (
                        <tr key={n} className="bg-white">{num}
                            <td className={cell + " pt-0.5 text-[16px] leading-5 font-bold text-[#3a3a3a] whitespace-pre"}>{n == 1 ? "HAA INCENTIVE PAYMENTS" : "PAYROLL DATE:  3/27/2026"}</td>
                            <td className={cell}></td><td className={cell}></td><td className={cell}></td>
                        </tr>
                    );
                    const row = sheetRows[n] ?? ["", "", "", ""];
                    return (
                        <tr key={n} className="bg-white leading-[19px]">{num}
                            <td className={cell}>{row[0]}</td>
                            <td className={cell}>{row[1]}</td>
                            <td className={cell}>{row[2] ? <div className="flex justify-between px-1"><span>$</span><span>{row[2]}</span></div> : null}</td>
                            <td className={cell + " text-right"}>{row[3]}</td>
                        </tr>
                    );
                })}
            </tbody>
        </table>
    );
}

function SheetFooter()
{
    return (
        <footer className="text-[12px] text-[#333]">
            <div className="flex h-[33px] items-center border-t border-[#ccc] pr-5 pb-0.5 pl-6">
                <button aria-label="Previous sheet" className="text-[#999]"><ChevronLeft size={15}/></button>
                <button aria-label="Next sheet" className="ml-[17px]"><ChevronRight size={15}/></button>
                <button className="ml-[42px] border-r border-[#ccc] px-[11px] text-[14px]">PAYDATE 1-16-26</button>
                <button className="w-[96px] pl-3 text-left text-[14px] whitespace-nowrap">PAYDATE 2-2</button>
                <button aria-label="More sheets" className="ml-1.5 flex gap-0.5">
                    <span className="h-[3px] w-[3px] rounded-full bg-[#333]"></span><span className="h-[3px] w-[3px] rounded-full bg-[#333]"></span><span className="h-[3px] w-[3px] rounded-full bg-[#333]"></span>
                </button>
                <button aria-label="New sheet" className="ml-[17px]"><Plus size={16} strokeWidth={1.5}/></button>
                <span className="mr-2 ml-5 font-bold">⋮</span>
                <div className="flex h-4 min-w-0 flex-1 items-center rounded-full bg-[#f6f6f6] px-1">
                    <span className="border-y-[5px] border-r-[7px] border-y-transparent border-r-[#707070]"></span>
                    <span className="ml-1.5 h-[9px] w-[118px] rounded-full bg-[#707070]"></span>
                    <span className="ml-auto border-y-[5px] border-l-[7px] border-y-transparent border-l-[#707070]"></span>
                </div>
            </div>
            <div className="flex h-[21px] items-center bg-[linear-gradient(to_right,#cfcfcf,#f5f5f5_50px)] pr-[18px] pl-3 text-[11px]">
                <span>Ready</span>
                <svg viewBox="0 0 14 14" className="ml-[19px] h-[14px] w-[14px]" fill="none" stroke="#333"><path d="M6 12.500 H0.500 V1.500 H13.500 V5 M0.500 4 H13.500 M3 7 H6 M3 9.500 H5"/><circle cx="10" cy="9.500" r="3.500"/><circle cx="10" cy="9.500" r="1"/></svg>
                <button className="ml-[18px] flex items-center gap-1 font-semibold">
                    <svg viewBox="0 0 14 14" className="h-[14px] w-[14px]" fill="none" stroke="#333"><circle cx="6" cy="2" r="1.500"/><path d="M0.500 3.500 L4 5.500 V9 L2 13.500 M11.500 3.500 L8 5.500 V7 M4 5.500 H8 M6 10 L5 13 M8 8 L13 13.500 M13 8 L8 13.500"/></svg>
                    Accessibility: Investigate
                </button>
                <button aria-label="Normal view" className="ml-auto flex h-[21px] w-10 items-center justify-center bg-[#dedede]">
                    <svg viewBox="0 0 14 13" className="h-[13px] w-[14px]" fill="none" stroke="#222"><path d="M0.500 0.500 H13.500 V12.500 H0.500Z M0.500 4.500 H13.500 M0.500 8.500 H13.500 M4.500 0.500 V12.500 M9.500 0.500 V12.500"/></svg>
                </button>
                <button aria-label="Page layout" className="flex w-10 justify-center">
                    <svg viewBox="0 0 14 13" className="h-[13px] w-[14px]" fill="none" stroke="#222"><path d="M0.500 0.500 H13.500 V12.500 H0.500Z M3.500 2.500 H10.500 V10.500 H3.500Z M5 4.500 H9 M5 6.500 H9 M5 8.500 H9"/></svg>
                </button>
                <button aria-label="Page break preview" className="flex w-10 justify-center">
                    <svg viewBox="0 0 14 13" className="h-[13px] w-[14px]" fill="none" stroke="#222"><path d="M0.500 0.500 H13.500 V12.500 H0.500Z M4.500 0.500 V7.500 H9.500 V0.500"/></svg>
                </button>
                <button aria-label="Zoom out" className="ml-1"><Minus size={11}/></button>
                <div className="relative mx-1 h-px w-[100px] bg-[#555]">
                    <input type="range" aria-label="Zoom level" className="absolute -top-2 h-4 w-full opacity-0"/>
                    <span className="absolute -top-1.5 left-1/2 h-3 w-1 bg-[#555]"></span>
                </div>
                <button aria-label="Zoom in"><Plus size={11}/></button>
                <span className="ml-3">100%</span>
            </div>
        </footer>
    );
}

function SheetWindow()
{
    return (
        <section className="flex min-w-0 flex-col overflow-hidden border-y border-r border-[#777] bg-[linear-gradient(to_right,#c4c4c4,#efefef_30px)] font-['Open_Sans',sans-serif]">
            <SheetTitleBar/>
            <RibbonTabs/>
            <Ribbon/>
            <FormulaBar/>
            <div className="mt-[5px] flex min-h-0 flex-1">
                <div className="min-w-0 flex-1 overflow-hidden border-r border-[#ddd]"><SheetGrid/></div>
                <div className="mr-1 ml-1 flex w-[14px] flex-col items-center rounded-full bg-[#f6f6f6] pt-1.5 pb-0.5">
                    <span className="border-x-[5px] border-b-[7px] border-x-transparent border-b-[#707070]"></span>
                    <span className="mt-1.5 w-[9px] flex-1 rounded-full bg-[#707070]"></span>
                    <span className="mt-[22px] border-x-[5px] border-t-[7px] border-x-transparent border-t-[#707070]"></span>
                </div>
            </div>
            <SheetFooter/>
        </section>
    );
}

/* ---------- taskbar ---------- */

function TaskIcon(props: { label: string, running?: boolean, children: ReactNode })
{
    return (
        <button aria-label={props.label} className="relative flex h-12 w-11 items-center justify-center">
            <svg viewBox="0 0 24 24" className="h-6 w-6">{props.children}</svg>
            {props.running ? <span className="absolute bottom-1.5 h-[3px] w-1.5 rounded-full bg-[#888]"></span> : null}
        </button>
    );
}

function Taskbar()
{
    return (
        <footer className="flex h-12 shrink-0 items-center bg-[#eee] pr-5 pl-[18px] font-['Open_Sans',sans-serif] text-[12px] leading-4 text-[#222]">
            <button className="flex w-[533px] items-center gap-[7px] text-left">
                <span className="relative">
                    <FaCloud size={25} color="#a4c1f2"/>
                    <span className="absolute -top-2 -right-1 flex h-4 w-4 items-center justify-center rounded-full bg-[#c42b1c] text-[11px] text-white">1</span>
                </span>
                <span><span className="block">36°F</span><span className="block text-[#666]">Mostly cloudy</span></span>
            </button>
            <button aria-label="Start" className="grid grid-cols-2 gap-px">
                <span className="h-[11px] w-[11px] bg-[#3fc0f5]"></span><span className="h-[11px] w-[11px] bg-[#1ba1ea]"></span>
                <span className="h-[11px] w-[11px] bg-[#1492e0]"></span><span className="h-[11px] w-[11px] bg-[#0078d4]"></span>
            </button>
            <label className="mr-[3px] ml-[13px] flex h-8 w-[219px] items-center gap-[11px] rounded-full border border-[#ddd] bg-[#fafafa] pl-[10px]">
                <Search size={16} strokeWidth={2.500}/>
                <input aria-label="Search" placeholder="Search" className="w-[150px] text-[13px] outline-none placeholder:text-[#666]"/>
            </label>
            <TaskIcon label="Task view"><rect x="8" y="1" width="15" height="15" fill="#fff"/><rect x="1" y="7" width="15" height="15" fill="#2b2b2b"/><rect x="8" y="7" width="8" height="9" fill="#b9b9b9"/></TaskIcon>
            <TaskIcon label="File Explorer" running><path d="M0 1 H9 L11 4 H24 V22 H0Z" fill="#e0a021"/><path d="M0 6 H24 V22 H0Z" fill="#ffd04c"/><path d="M4 17 a2 2 0 0 1 2 -2 H18 a2 2 0 0 1 2 2 V22 H4Z" fill="#1673c4"/></TaskIcon>
            <TaskIcon label="Edge" running><circle cx="12.500" cy="11.500" r="11.500" fill="#1b8fd6"/><path d="M2 10 A11 11 0 0 1 24 11 Q22 16 15 15 Q18 8 10 8 Q5 8 2 14Z" fill="#4fd08a"/><path d="M11 12 Q11 19 20 18 Q15 24 8 21Z" fill="#0f4f96"/><rect x="0" y="15" width="11" height="9" rx="1" fill="#b97a16"/><path d="M0 19 H11" stroke="#6d430a"/></TaskIcon>
            <button aria-label="Teams" className="relative mx-0.5 flex h-10 w-10 items-center justify-center rounded bg-[#e9b0ac]">
                <svg viewBox="0 0 24 24" className="h-6 w-6"><circle cx="11" cy="4" r="4" fill="#7b83eb"/><path d="M5 9 H20 V18 a6 6 0 0 1 -12 4Z" fill="#6a72e0"/><path d="M17 9 H23 V17 a4 4 0 0 1 -5 4Z" fill="#9aa0f5"/><rect x="2" y="11" width="10" height="11" rx="1.500" fill="#4b53bc"/><path d="M4.500 14 H9.500 M7 14 V19.500" stroke="#fff" strokeWidth="1.500"/></svg>
                <span className="absolute top-1 right-0.5 flex h-4 w-4 items-center justify-center rounded-full bg-[#c42b1c] text-[11px] text-white">1</span>
                <span className="absolute bottom-0.5 h-[3px] w-8 rounded-full bg-[#c42b1c]"></span>
            </button>
            <TaskIcon label="Remote Desktop"><path d="M2 2 L18 1 L20 15 L4 16Z" fill="#1c3fc4" stroke="#bbb"/><path d="M3 3 L10 2 L11 15 L5 15Z" fill="#0a1f86"/><path d="M6 20 L16 17 L18 20 L8 22Z" fill="#ccc"/><circle cx="18.500" cy="18.500" r="5" fill="#e8ece8" stroke="#999"/><path d="M16 17 L18 19 L16 21 M21 16 L19 18 L21 20" stroke="#2e8b2e" fill="none"/></TaskIcon>
            <TaskIcon label="Contact Center"><circle cx="12" cy="12" r="11" fill="#fff" stroke="#1267ad" strokeWidth="2"/><path d="M18 7 A7.500 7.500 0 1 0 18 17 M17 10 A4 4 0 1 0 17 14 M14 9 H22 M14 15 H22" fill="none" stroke="#1267ad" strokeWidth="2.200"/></TaskIcon>
            <button aria-label="Chrome" className="relative mx-0.5 flex h-10 w-10 items-center justify-center rounded border border-[#e2e2e2] bg-[#f9f9f9]">
                <svg viewBox="0 0 24 24" className="h-6 w-6"><path d="M12 12 L2 6.500 A11.500 11.500 0 0 1 22 6.500Z" fill="#ea4335"/><path d="M12 12 L22 6.500 A11.500 11.500 0 0 1 12 23.500Z" fill="#fbbc04"/><path d="M12 12 L12 23.500 A11.500 11.500 0 0 1 2 6.500Z" fill="#34a853"/><path d="M12 6.500 H22 A11.500 11.500 0 0 1 12 23.500 L17 14Z" fill="#fbbc04"/><circle cx="12" cy="12" r="5.700" fill="#fff"/><circle cx="12" cy="12" r="4.500" fill="#4285f4"/></svg>
                <span className="absolute bottom-0 h-[3px] w-4 rounded-full bg-[#0078d4]"></span>
            </button>
            <TaskIcon label="Outlook" running><path d="M12 1 L23 9 V20 a2 2 0 0 1 -2 2 H6Z" fill="#28a8ea"/><path d="M12 1 L3 8 V14 L17 5Z" fill="#0a5db8"/><path d="M23 10 L8 20 L10 22 H21 a2 2 0 0 0 2 -2Z" fill="#7cc9f7"/><rect x="0" y="11" width="11" height="11" rx="2" fill="#0f6cbd"/><circle cx="5.500" cy="16.500" r="2.600" fill="none" stroke="#fff" strokeWidth="1.500"/></TaskIcon>
            <TaskIcon label="OneNote" running><rect x="5" y="1" width="17" height="22" rx="3" fill="#b44fe0"/><path d="M5 4 a3 3 0 0 1 3 -3 H19 a3 3 0 0 1 3 3 V9 H5Z" fill="#e08bf8"/><rect x="15" y="14" width="7" height="9" fill="#8427b8"/><rect x="1" y="11" width="11" height="11" rx="2" fill="#8a1ec2"/><path d="M4 19.500 V13.500 L9 19.500 V13.500" fill="none" stroke="#fff" strokeWidth="1.500"/></TaskIcon>
            <TaskIcon label="Quick assistant" running><rect x="2" y="2" width="20" height="20" rx="4" fill="#3c1a7d"/><path d="M17 9 Q13 5 9 8 Q6 13 10 16 Q14 18 16 13 H12 M16 14 V18" fill="none" stroke="#fff" strokeWidth="2.200"/><path d="M5 6 H7 M18 5 H19 M6 18 H7" stroke="#e9b6ff"/></TaskIcon>
            <button aria-label="Excel" className="relative flex h-12 w-11 items-center justify-center"><ExcelMark className="h-6 w-6"/><span className="absolute bottom-1.5 h-[3px] w-1.5 rounded-full bg-[#888]"></span></button>
            <TaskIcon label="Calculator" running><rect x="3" y="1" width="18" height="22" rx="2" fill="#5f6f7d"/><rect x="5" y="3" width="14" height="4" fill="#3fc6f2"/><path d="M5 9 H9 V12.500 H5Z M10 9 H14 V12.500 H10Z M15 9 H19 V12.500 H15Z M5 13.500 H9 V17 H5Z M10 13.500 H14 V17 H10Z M5 18 H9 V21.500 H5Z M10 18 H14 V21.500 H10Z" fill="#dfe5ea"/><rect x="15" y="13.500" width="4" height="8" fill="#0f4f8f"/></TaskIcon>
            <TaskIcon label="Acrobat" running><rect x="1" y="2" width="22" height="21" rx="4" fill="#b30b00"/><path d="M6 18 Q12 12 12 7 Q11 4 10.500 7 Q12 14 18 15 Q19 13 15 13.500 Q10 14 6 18Z" fill="none" stroke="#fff" strokeWidth="1.500"/></TaskIcon>
            <div className="ml-auto flex items-center gap-2">
                <ChevronUp size={15}/>
                <Mic size={18} color="#2a62b8" className="mx-[7px]"/>
                <Wifi size={16} strokeWidth={1.7}/>
                <Volume2 size={16} strokeWidth={1.5}/>
                <svg viewBox="0 0 20 12" className="h-3 w-5"><rect x="0.500" y="1.500" width="17" height="10" rx="2" fill="#16811a" stroke="#222"/><path d="M18.500 4 V9" stroke="#222" strokeWidth="2"/><path d="M10 0 L6 6 H9 L8 11 L13 4 H10Z" fill="#fff" stroke="#222" strokeWidth="0.500"/></svg>
                <span className="ml-3 text-right text-[11px]"><span className="block">11:50 AM</span><span className="block">3/24/2026</span></span>
            </div>
        </footer>
    );
}

export default function App()
{
    return (
        <div className="flex h-screen flex-col overflow-hidden bg-[#eee]">
            <div className="grid min-h-0 flex-1 grid-cols-[1223fr_697fr]">
                <BrowserWindow/>
                <SheetWindow/>
            </div>
            <Taskbar/>
        </div>
    );
}
